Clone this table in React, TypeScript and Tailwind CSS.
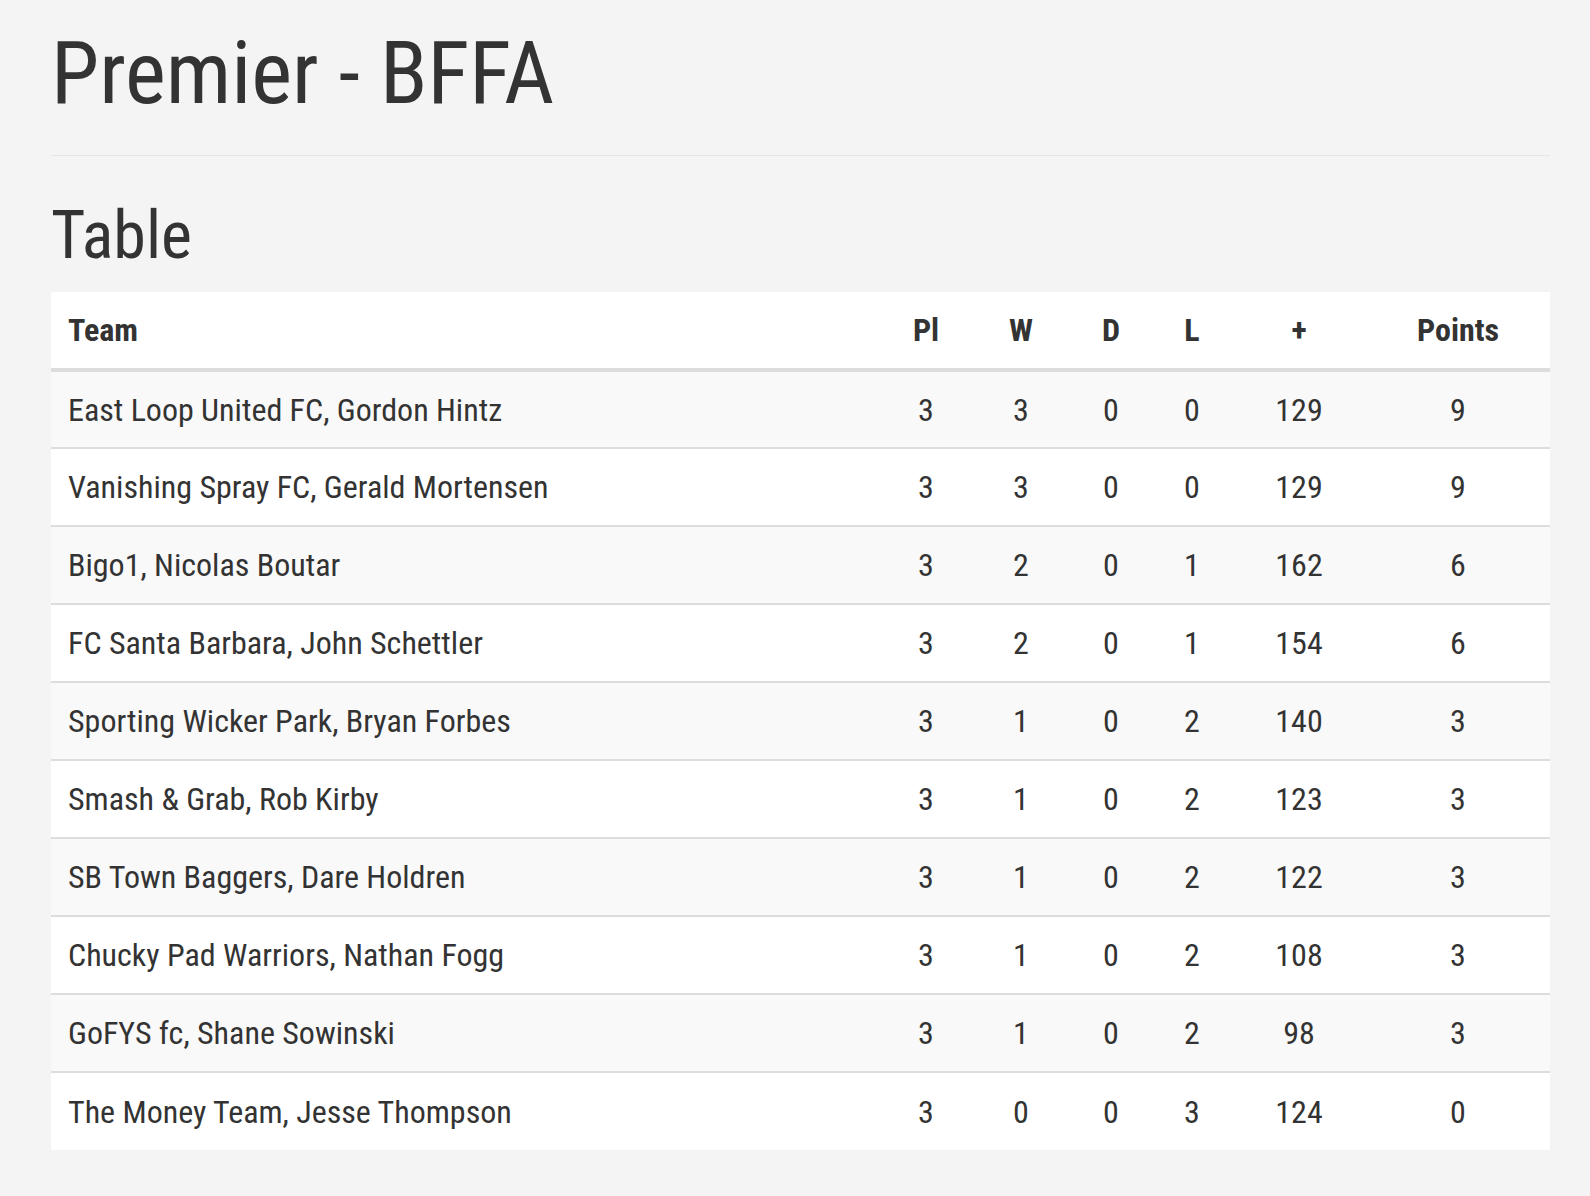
const rows = [
  { team: "East Loop United FC, Gordon Hintz", pl: 3, w: 3, d: 0, l: 0, plus: 129, pts: 9 },
  { team: "Vanishing Spray FC, Gerald Mortensen", pl: 3, w: 3, d: 0, l: 0, plus: 129, pts: 9 },
  { team: "Bigo1, Nicolas Boutar", pl: 3, w: 2, d: 0, l: 1, plus: 162, pts: 6 },
  { team: "FC Santa Barbara, John Schettler", pl: 3, w: 2, d: 0, l: 1, plus: 154, pts: 6 },
  { team: "Sporting Wicker Park, Bryan Forbes", pl: 3, w: 1, d: 0, l: 2, plus: 140, pts: 3 },
  { team: "Smash & Grab, Rob Kirby", pl: 3, w: 1, d: 0, l: 2, plus: 123, pts: 3 },
  { team: "SB Town Baggers, Dare Holdren", pl: 3, w: 1, d: 0, l: 2, plus: 122, pts: 3 },
  { team: "Chucky Pad Warriors, Nathan Fogg", pl: 3, w: 1, d: 0, l: 2, plus: 108, pts: 3 },
  { team: "GoFYS fc, Shane Sowinski", pl: 3, w: 1, d: 0, l: 2, plus: 98, pts: 3 },
  { team: "The Money Team, Jesse Thompson", pl: 3, w: 0, d: 0, l: 3, plus: 124, pts: 0 },
];

export default function App() {
  return (
    <div className="min-h-screen bg-[#f4f4f4] pl-[51px] pr-[40px] pt-[30px] text-[#333] font-['Roboto_Condensed','Roboto',sans-serif] font-stretch-condensed">
      <h1 className="text-[87px] leading-none">Premier - BFFA</h1>
      <hr className="mt-[38px] border-0 h-px bg-[#e6e6e6]" />
      <h2 className="mt-[47px] text-[66px] leading-none">Table</h2>
      <table className="mt-[23px] w-full table-fixed border-collapse bg-white text-[32px]">
        <thead>
          <tr className="h-[78px] border-b-4 border-[#dddddd] font-bold">
            <th className="text-left pl-[17px] w-[829px]">Team</th>
            <th className="w-[92px] text-center">Pl</th>
            <th className="w-[98px] text-center">W</th>
            <th className="w-[82px] text-center">D</th>
            <th className="w-[80px] text-center">L</th>
            <th className="w-[134px] text-center">+</th>
            <th className="w-[184px] text-center">Points</th>
          </tr>
        </thead>
        <tbody>
          {rows.map((r, i) => (
            <tr
              key={r.team}
              className={`h-[78px] ${i > 0 ? "border-t-2 border-[#dddddd]" : ""} ${i % 2 === 0 ? "bg-[#f9f9f9]" : "bg-white"}`}
            >
              <td className="pl-[17px]">{r.team}</td>
              <td className="text-center">{r.pl}</td>
              <td className="text-center">{r.w}</td>
              <td className="text-center">{r.d}</td>
              <td className="text-center">{r.l}</td>
              <td className="text-center">{r.plus}</td>
              <td className="text-center">{r.pts}</td>
            </tr>
          ))}
        </tbody>
      </table>
    </div>
  );
}
